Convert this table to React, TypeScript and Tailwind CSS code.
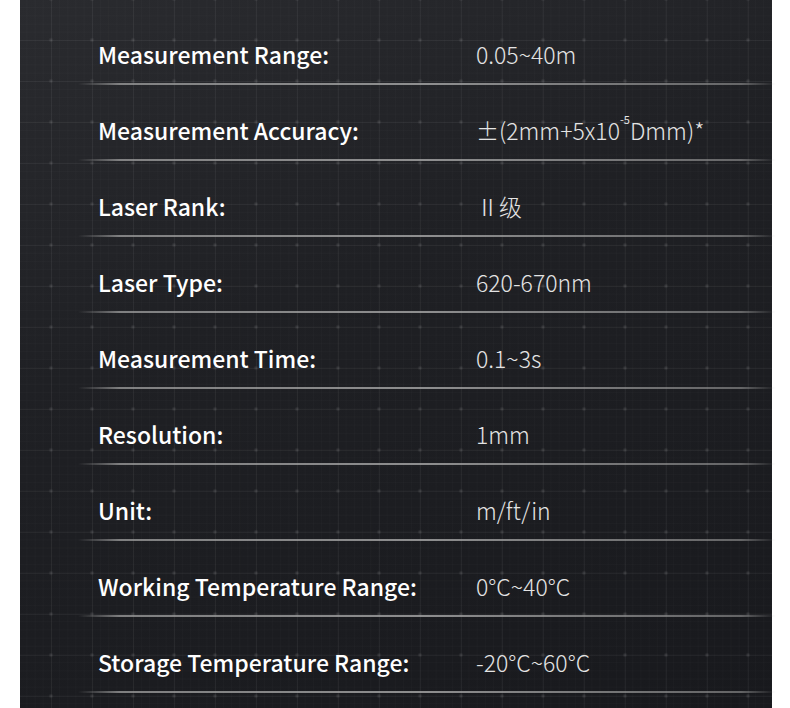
import React from "react";

const rows: { label: string; value: React.ReactNode }[] = [
  { label: "Measurement Range:", value: "0.05~40m" },
  {
    label: "Measurement Accuracy:",
    value: (
      <>
        ±(2mm+5x10
        <span className="inline-block align-top text-[11px] leading-none relative top-[1px] font-normal">-5</span>
        Dmm)*
      </>
    ),
  },
  { label: "Laser Rank:", value: "Ⅱ级" },
  { label: "Laser Type:", value: "620-670nm" },
  { label: "Measurement Time:", value: "0.1~3s" },
  { label: "Resolution:", value: "1mm" },
  { label: "Unit:", value: "m/ft/in" },
  { label: "Working Temperature Range:", value: "0°C~40°C" },
  { label: "Storage Temperature Range:", value: "-20°C~60°C" },
];

export default function App() {
  return (
    <div className="w-[790px] h-[708px] bg-white overflow-hidden">
      <div
        className="ml-[20px] w-[752px] h-[708px] pt-[9px] bg-[#1d1e22] [background-image:radial-gradient(circle,rgba(255,255,255,0.09)_1.5px,transparent_2.1px),linear-gradient(to_right,rgba(255,255,255,0.045)_1px,transparent_1px),linear-gradient(to_bottom,rgba(255,255,255,0.045)_1px,transparent_1px),linear-gradient(to_right,rgba(255,255,255,0.015)_1px,transparent_1px),linear-gradient(to_bottom,rgba(255,255,255,0.015)_1px,transparent_1px),linear-gradient(160deg,#2a2b2f_0%,#1f2024_40%,#18191d_100%)] [background-size:41px_41px,41px_41px,41px_41px,8.2px_8.2px,8.2px_8.2px,100%_100%] [background-position:10.5px_19.5px,31px_-1px,31px_-1px,6.4px_7.2px,6.4px_7.2px,0_0]"
        style={{ fontFamily: '"Noto Sans CJK SC", "Noto Sans", sans-serif' }}
      >
        {rows.map((r) => (
          <div key={r.label} className="relative h-[76px] flex items-end">
            <div className="flex items-center h-[62px] pl-[78px] w-full">
              <div className="w-[378px] text-[23px] font-medium text-white">
                {r.label}
              </div>
              <div className="text-[23px] font-light text-[#e4e4e4]">{r.value}</div>
            </div>
            <div className="absolute left-[58px] right-[-4px] bottom-0 h-[2px] bg-[linear-gradient(to_right,rgba(160,160,160,0)_0%,rgba(160,160,160,0.75)_6%,rgba(170,170,170,0.8)_50%,rgba(150,150,150,0.6)_95%,rgba(150,150,150,0)_100%)]" />
          </div>
        ))}
      </div>
    </div>
  );
}
